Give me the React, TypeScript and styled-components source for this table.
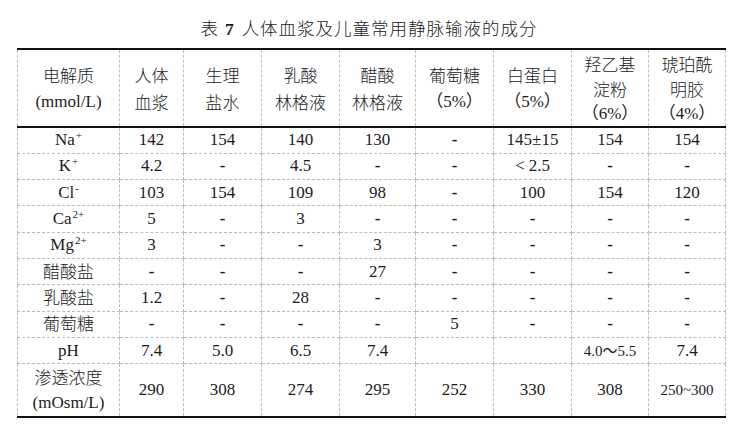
import styled, { createGlobalStyle } from "styled-components";

const GlobalStyle = createGlobalStyle`
  html, body {
    margin: 0;
    padding: 0;
    background: #ffffff;
  }
  body {
    font-family: "Liberation Serif", "Noto Sans CJK SC", serif;
    color: #1c1c1c;
  }
`;

export const Page = styled.div`
  width: 744px;
  height: 434px;
  padding: 17px 19px 0 17px;
  box-sizing: border-box;
`;

export const Title = styled.h1`
  margin: 0 0 10px 0;
  font-size: 17.5px;
  font-weight: 400;
  letter-spacing: 1px;
  line-height: 21px;
  height: 21px;
  text-align: center;
  padding-right: 4px;
`;

export const TitleNum = styled.b`
  font-weight: 700;
  margin: 0 7px 0 6px;
`;

// CJK runs use the lighter weight of Noto Sans CJK, closer to the book face
export const Han = styled.span`
  font-family: "Noto Sans CJK SC", sans-serif;
  font-weight: 300;
`;

export const Table = styled.table`
  width: 708px;
  border-collapse: collapse;
  table-layout: fixed;
  font-size: 17px;
  border-top: 2px solid #111;
  border-bottom: 2px solid #111;
`;

export const HeadRow = styled.tr`
  height: 78px;
  border-bottom: 2px solid #111;
`;

export const BodyRow = styled.tr<{ $tall?: boolean }>`
  height: ${(p) => (p.$tall ? "51px" : "26.3px")};
`;

export const HeadCell = styled.th`
  font-weight: 400;
  text-align: center;
  vertical-align: middle;
  padding: 0;
  border-left: 1px dashed #bdbdbd;
  border-right: 1px dashed #bdbdbd;
`;

export const Line = styled.div<{ $h: number }>`
  height: ${(p) => p.$h}px;
  line-height: ${(p) => p.$h}px;
  overflow: visible;
  white-space: nowrap;
`;

export const Cell = styled.td<{ $dash?: boolean; $small?: boolean }>`
  text-align: center;
  vertical-align: middle;
  padding: 0;
  line-height: 20px;
  white-space: nowrap;
  font-weight: ${(p) => (p.$dash ? 700 : 400)};
  font-size: ${(p) => (p.$small ? "15px" : "17px")};
  border: 1px dashed #bdbdbd;
`;

export const Sup = styled.sup`
  font-size: 11px;
  vertical-align: 6px;
  line-height: 0;
  margin-left: 1px;
`;

const hasHan = (s: string) => /[\u3000-\u9fff\uff00-\uffef]/.test(s) && !/\d/.test(s);

const Txt = ({ s }: { s: string }) => (hasHan(s) ? <Han>{s}</Han> : <>{s}</>);

const headers: string[][] = [
  ["电解质", "(mmol/L)"],
  ["人体", "血浆"],
  ["生理", "盐水"],
  ["乳酸", "林格液"],
  ["醋酸", "林格液"],
  ["葡萄糖", "（5%）"],
  ["白蛋白", "（5%）"],
  ["羟乙基", "淀粉", "（6%）"],
  ["琥珀酰", "明胶", "（4%）"],
];

const colWidths = [102, 64, 78, 78, 76, 78, 78, 77, 77];

type Label = { text: string; sup?: string; lines?: string[] };

const rows: { label: Label; values: string[] }[] = [
  { label: { text: "Na", sup: "+" }, values: ["142", "154", "140", "130", "-", "145±15", "154", "154"] },
  { label: { text: "K", sup: "+" }, values: ["4.2", "-", "4.5", "-", "-", "< 2.5", "-", "-"] },
  { label: { text: "Cl", sup: "-" }, values: ["103", "154", "109", "98", "-", "100", "154", "120"] },
  { label: { text: "Ca", sup: "2+" }, values: ["5", "-", "3", "-", "-", "-", "-", "-"] },
  { label: { text: "Mg", sup: "2+" }, values: ["3", "-", "-", "3", "-", "-", "-", "-"] },
  { label: { text: "醋酸盐" }, values: ["-", "-", "-", "27", "-", "-", "-", "-"] },
  { label: { text: "乳酸盐" }, values: ["1.2", "-", "28", "-", "-", "-", "-", "-"] },
  { label: { text: "葡萄糖" }, values: ["-", "-", "-", "-", "5", "-", "-", "-"] },
  { label: { text: "pH" }, values: ["7.4", "5.0", "6.5", "7.4", "", "", "4.0～5.5", "7.4"] },
  {
    label: { text: "", lines: ["渗透浓度", "(mOsm/L)"] },
    values: ["290", "308", "274", "295", "252", "330", "308", "250~300"],
  },
];

const App = () => {
  return (
    <Page>
      <GlobalStyle />
      <Title>
        <Han>表</Han>
        <TitleNum>7</TitleNum>
        <Han>人体血浆及儿童常用静脉输液的成分</Han>
      </Title>
      <Table>
        <colgroup>
          {colWidths.map((w, i) => (
            <col key={i} style={{ width: w }} />
          ))}
        </colgroup>
        <thead>
          <HeadRow>
            {headers.map((lines, i) => (
              <HeadCell key={i}>
                {lines.map((l, j) => (
                  <Line key={j} $h={lines.length === 3 ? 25 : 27}>
                    <Txt s={l} />
                  </Line>
                ))}
              </HeadCell>
            ))}
          </HeadRow>
        </thead>
        <tbody>
          {rows.map((row, i) => (
            <BodyRow key={i} $tall={!!row.label.lines}>
              <Cell>
                {row.label.lines ? (
                  row.label.lines.map((l, j) => (
                    <Line key={j} $h={26}>
                      <Txt s={l} />
                    </Line>
                  ))
                ) : (
                  <Txt s={row.label.text} />
                )}
                {row.label.sup && <Sup>{row.label.sup}</Sup>}
              </Cell>
              {row.values.map((v, j) => (
                <Cell key={j} $dash={v === "-"} $small={v.length > 6}>
                  {v}
                </Cell>
              ))}
            </BodyRow>
          ))}
        </tbody>
      </Table>
    </Page>
  );
};

export default App;
